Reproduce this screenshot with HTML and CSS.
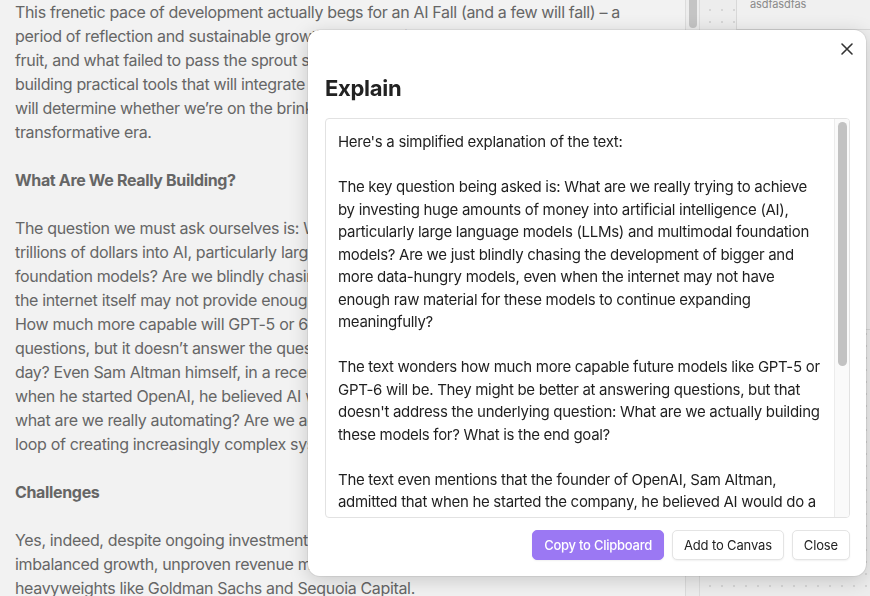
FILE: index.html
```html
<!DOCTYPE html>
<html>
<head>
<meta charset="utf-8">
<link rel="stylesheet" href="styles.css">
</head>
<body>
<div class="app">
  <main class="doc">
    <p>This frenetic pace of development actually begs for an AI Fall (and a few will fall) – a<br>period of reflection and sustainable growth, to see which seeds actually bore<br>fruit, and what failed to pass the sprout stage. Whether we are serious about<br>building practical tools that will integrate into our everyday workflows<br>will determine whether we’re on the brink of a bubble or the dawn of a<br>transformative era.</p>
    <h3>What Are We Really Building?</h3>
    <p>The question we must ask ourselves is: What are we really trying to achieve by pouring<br>trillions of dollars into AI, particularly large language models (LLMs) and multimodal<br>foundation models? Are we blindly chasing ever bigger models, even when<br>the internet itself may not provide enough data to train them meaningfully?<br>How much more capable will GPT-5 or 6 be? They may answer more<br>questions, but it doesn’t answer the question of what we need them for at the end of the<br>day? Even Sam Altman himself, in a recent interview, admitted that<br>when he started OpenAI, he believed AI would take over the menial jobs first. So<br>what are we really automating? Are we actually solving problems, or stuck in a<br>loop of creating increasingly complex systems for their own sake?</p>
    <h3>Challenges</h3>
    <p>Yes, indeed, despite ongoing investment, the AI industry faces challenges such as<br>imbalanced growth, unproven revenue models and mounting skepticism from<br>heavyweights like Goldman Sachs and Sequoia Capital.</p>
  </main>
  <div class="gutter"><div class="gutter-thumb"></div></div>
  <section class="canvas">
    <div class="node node-a"><span class="node-label">asdfasdfas</span></div>
    <div class="node node-b"></div>
  </section>
</div>

<div class="modal">
  <button class="modal-x" aria-label="Close">
    <svg width="14" height="14" viewBox="0 0 14 14"><path d="M2 2 L12 12 M12 2 L2 12" stroke="#333" stroke-width="1.6" stroke-linecap="round"/></svg>
  </button>
  <h2 class="modal-title">Explain</h2>
  <div class="answer">
    <div class="answer-text">Here's a simplified explanation of the text:<br><br>The key question being asked is: What are we really trying to achieve<br>by investing huge amounts of money into artificial intelligence (AI),<br>particularly large language models (LLMs) and multimodal foundation<br>models? Are we just blindly chasing the development of bigger and<br>more data-hungry models, even when the internet may not have<br>enough raw material for these models to continue expanding<br>meaningfully?<br><br>The text wonders how much more capable future models like GPT-5 or<br>GPT-6 will be. They might be better at answering questions, but that<br>doesn't address the underlying question: What are we actually building<br>these models for? What is the end goal?<br><br>The text even mentions that the founder of OpenAI, Sam Altman,<br>admitted that when he started the company, he believed AI would do a<br>lot of the hard work for us, but it turns out it is mostly good at</div>
    <div class="answer-scroll"><div class="answer-thumb"></div></div>
  </div>
  <div class="modal-actions">
    <button class="btn btn-primary">Copy to Clipboard</button>
    <button class="btn">Add to Canvas</button>
    <button class="btn">Close</button>
  </div>
</div>
</body>
</html>
```
FILE: styles.css
```css
* { box-sizing: border-box; }
html, body { margin: 0; height: 100%; }
body {
  font-family: Inter, "Noto Sans", "Liberation Sans", sans-serif;
  background: #f2f2f2;
  overflow: hidden;
}
.app {
  display: flex;
  height: 596px;
  width: 870px;
  overflow: hidden;
}
.doc {
  width: 685px;
  flex: none;
  padding: 0 0 0 15px;
  color: #666;
  font-size: 16px;
  line-height: 24px;
  letter-spacing: -0.34px;
  white-space: nowrap;
  overflow: hidden;
  background: #f2f2f2;
}
.doc p { margin: 0 0 24px; }
.doc h3 { margin: 0 0 24px; font-size: 16px; font-weight: 700; line-height: 24px; }
.gutter {
  width: 15px;
  flex: none;
  border-left: 1px solid #dcdcdc;
  border-right: 1px solid #dcdcdc;
  background: #ededed;
  padding: 0 3px 0 3px;
}
.gutter-thumb {
  width: 8px;
  height: 28px;
  background: #c4c4c4;
  border-radius: 0 0 4px 4px;
}
.canvas {
  flex: 1;
  position: relative;
  background-color: #ededed;
  background-image: radial-gradient(circle, #d6d6d6 0.8px, transparent 1px);
  background-size: 12px 12px;
  background-position: 4px 4px;
}
.node {
  position: absolute;
  background: #f0f0f0;
  border: 1px solid #d8d8d8;
}
.node-a {
  left: 36px;
  top: -12px;
  width: 200px;
  height: 42px;
  padding: 8px 0 0 13px;
}
.node-label { display: block; font-size: 11px; color: #8a8a8a; line-height: 14px; letter-spacing: -0.1px; }
.node-b {
  left: 36px;
  top: 30px;
  width: 200px;
  height: 300px;
  border-top: none;
  background: #efefef;
}
.modal {
  position: fixed;
  left: 308px;
  top: 30px;
  width: 558px;
  height: 546px;
  background: #fff;
  border-radius: 12px;
  box-shadow: 0 4px 20px rgba(0,0,0,0.18), 0 0 0 1px rgba(0,0,0,0.06);
  padding: 0 16px 16px 17px;
  display: flex;
  flex-direction: column;
}
.modal-x {
  position: absolute;
  right: 11px;
  top: 11px;
  width: 16px;
  height: 16px;
  border: none;
  background: none;
  padding: 0;
  display: flex;
  align-items: center;
  justify-content: center;
}
.modal-title {
  margin: 43px 0 0;
  font-size: 22px;
  line-height: 30px;
  font-weight: 700;
  color: #222;
  letter-spacing: -0.3px;
}
.answer {
  margin-top: 15px;
  height: 400px;
  border: 1px solid #e2e2e2;
  border-radius: 4px;
  display: flex;
  overflow: hidden;
}
.answer-text {
  flex: 1;
  padding: 12px 0 0 12px;
  font-size: 15px;
  line-height: 22.5px;
  letter-spacing: -0.3px;
  color: #1f1f1f;
  white-space: nowrap;
  overflow: hidden;
}
.answer-scroll {
  width: 15px;
  flex: none;
  background: #fafafa;
  border-left: 1px solid #ececec;
  padding: 3px 0 0 3px;
}
.answer-thumb {
  width: 9px;
  height: 244px;
  background: #c2c2c2;
  border-radius: 5px;
}
.modal-actions {
  margin-top: 12px;
  display: flex;
  justify-content: flex-end;
  gap: 8px;
}
.btn {
  height: 30px;
  padding: 0 11px;
  font-family: inherit;
  font-size: 13px;
  letter-spacing: -0.15px;
  color: #222;
  background: #fff;
  border: 1px solid #e4e4e4;
  border-radius: 5px;
  box-shadow: 0 1px 2px rgba(0,0,0,0.06);
}
.btn-primary {
  background: #9b78f3;
  border-color: #9b78f3;
  color: #fff;
  font-weight: 500;
  letter-spacing: -0.25px;
}
```
